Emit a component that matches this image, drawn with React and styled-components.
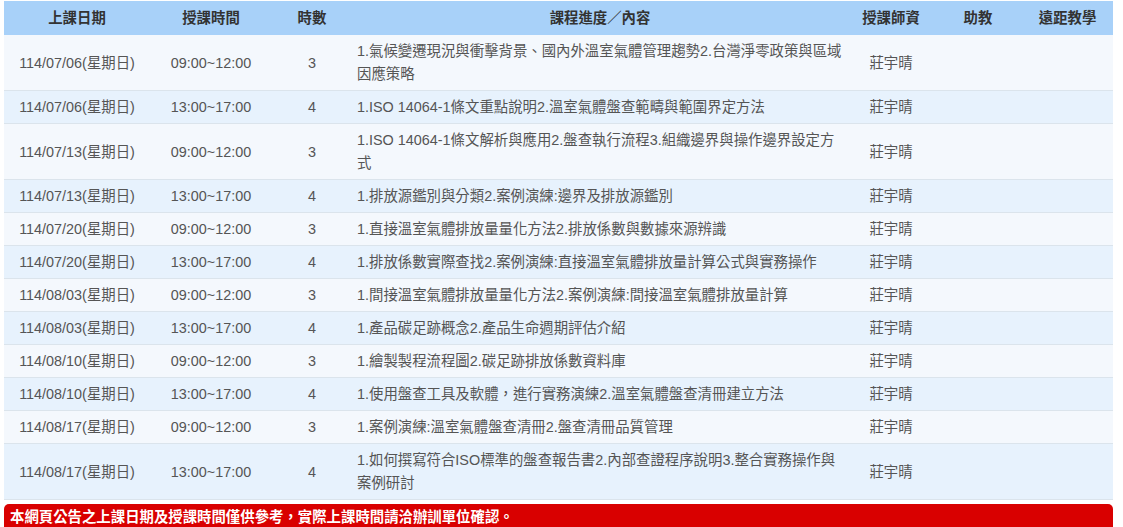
import styled, { createGlobalStyle } from "styled-components";

const GlobalStyle = createGlobalStyle`
  body {
    margin: 0;
    background: #ffffff;
    font-family: "Liberation Sans", "Noto Sans CJK TC", sans-serif;
  }
`;

const Page = styled.div`
  padding: 1px 10px 0 4px;
  height: 527px;
  overflow: hidden;
  box-sizing: border-box;
`;

const Table = styled.table`
  width: 1109px;
  border-collapse: collapse;
  table-layout: fixed;
  font-size: 14.4px;
  line-height: 23px;
  color: #555555;
`;

const HeadCell = styled.th`
  background: #a8d1f9;
  color: #333333;
  font-weight: bold;
  text-align: center;
  padding: 6px 5px 5px;
`;

const Row = styled.tr`
  background: ${(p) => (p.$alt ? "#e7f2fd" : "#f4f8fd")};
  border-bottom: 1px solid #dbe4ec;
`;

const Cell = styled.td`
  text-align: ${(p) => (p.$left ? "left" : "center")};
  vertical-align: middle;
  padding: 5px 5px 4px;
`;

const Notice = styled.div`
  margin-top: 4px;
  width: 1109px;
  background: #d90000;
  color: #ffffff;
  font-weight: bold;
  font-size: 14.4px;
  line-height: 23px;
  padding: 2px 6px;
  border-radius: 5px 5px 0 0;
  box-sizing: border-box;
`;

const widths = [146, 122, 80, 496, 86, 88, 91];
const heads = ["上課日期", "授課時間", "時數", "課程進度／內容", "授課師資", "助教", "遠距教學"];

const rows = [
  ["114/07/06(星期日)", "09:00~12:00", "3", "1.氣候變遷現況與衝擊背景、國內外溫室氣體管理趨勢2.台灣淨零政策與區域因應策略"],
  ["114/07/06(星期日)", "13:00~17:00", "4", "1.ISO 14064-1條文重點說明2.溫室氣體盤查範疇與範圍界定方法"],
  ["114/07/13(星期日)", "09:00~12:00", "3", "1.ISO 14064-1條文解析與應用2.盤查執行流程3.組織邊界與操作邊界設定方式"],
  ["114/07/13(星期日)", "13:00~17:00", "4", "1.排放源鑑別與分類2.案例演練:邊界及排放源鑑別"],
  ["114/07/20(星期日)", "09:00~12:00", "3", "1.直接溫室氣體排放量量化方法2.排放係數與數據來源辨識"],
  ["114/07/20(星期日)", "13:00~17:00", "4", "1.排放係數實際查找2.案例演練:直接溫室氣體排放量計算公式與實務操作"],
  ["114/08/03(星期日)", "09:00~12:00", "3", "1.間接溫室氣體排放量量化方法2.案例演練:間接溫室氣體排放量計算"],
  ["114/08/03(星期日)", "13:00~17:00", "4", "1.產品碳足跡概念2.產品生命週期評估介紹"],
  ["114/08/10(星期日)", "09:00~12:00", "3", "1.繪製製程流程圖2.碳足跡排放係數資料庫"],
  ["114/08/10(星期日)", "13:00~17:00", "4", "1.使用盤查工具及軟體，進行實務演練2.溫室氣體盤查清冊建立方法"],
  ["114/08/17(星期日)", "09:00~12:00", "3", "1.案例演練:溫室氣體盤查清冊2.盤查清冊品質管理"],
  ["114/08/17(星期日)", "13:00~17:00", "4", "1.如何撰寫符合ISO標準的盤查報告書2.內部查證程序說明3.整合實務操作與案例研討"],
];

const App = () => {
  return (
    <Page>
      <GlobalStyle />
      <Table>
        <colgroup>
          {widths.map((w, i) => (
            <col key={i} style={{ width: w }} />
          ))}
        </colgroup>
        <thead>
          <tr>
            {heads.map((h) => (
              <HeadCell key={h}>{h}</HeadCell>
            ))}
          </tr>
        </thead>
        <tbody>
          {rows.map((r, i) => (
            <Row key={i} $alt={i % 2 === 1}>
              <Cell>{r[0]}</Cell>
              <Cell>{r[1]}</Cell>
              <Cell>{r[2]}</Cell>
              <Cell $left>{r[3]}</Cell>
              <Cell>莊宇晴</Cell>
              <Cell></Cell>
              <Cell></Cell>
            </Row>
          ))}
        </tbody>
      </Table>
      <Notice>本網頁公告之上課日期及授課時間僅供參考，實際上課時間請洽辦訓單位確認。</Notice>
    </Page>
  );
};

export default App;
